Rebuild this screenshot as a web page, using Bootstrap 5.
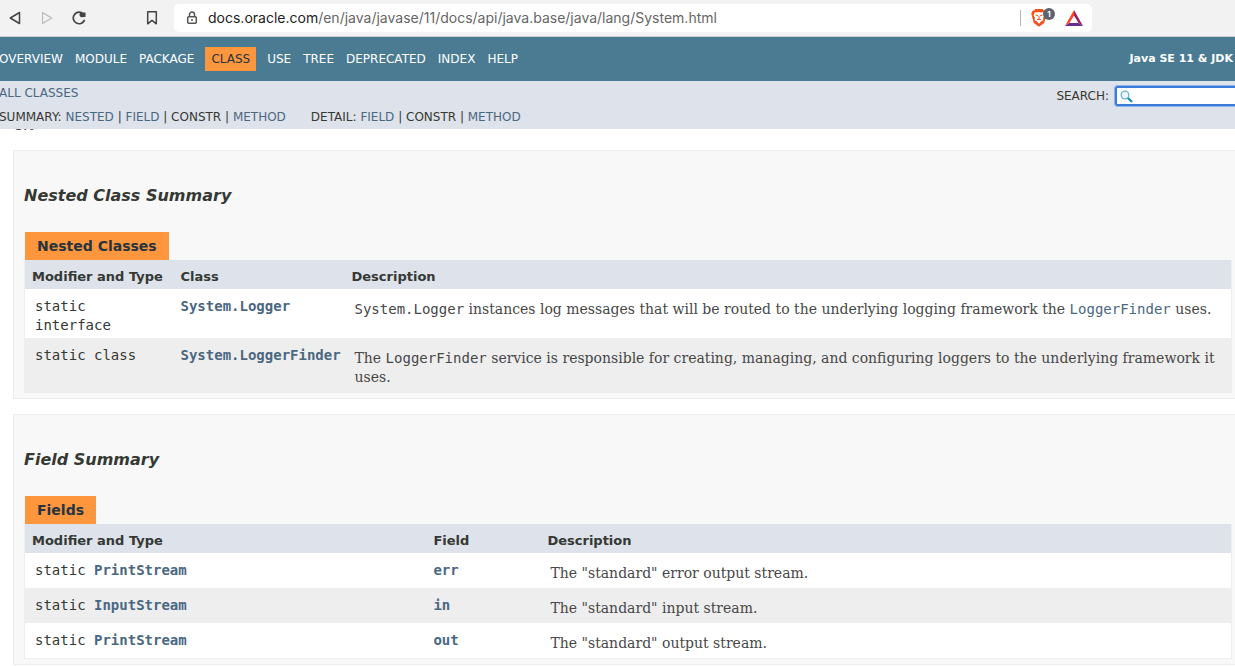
<!DOCTYPE html>
<html lang="en">
<head>
<meta charset="utf-8">
<meta name="viewport" content="width=device-width, initial-scale=1">
<title>System (Java SE 11 &amp; JDK 11)</title>
<link href="https://cdn.jsdelivr.net/npm/bootstrap@5.3.0/dist/css/bootstrap.min.css" rel="stylesheet">
<style>
body{font-family:"DejaVu Sans",sans-serif;font-size:14px;line-height:19px;color:#353833;background:#fff;overflow-x:hidden}
a{color:#4a6782;text-decoration:none}
.browser-bar{background:#f2f2f2;border-bottom:1px solid #d0d0d0;height:37px;padding-left:8px;color:#444}
.browser-bar button{border:0;background:none;padding:0;line-height:0;color:inherit}
.tool-group{width:166px}
.address{width:918px;height:28px;border-radius:5px;background:#fff;padding:0 9px 0 12px}
.address-text{font-family:Inter,sans-serif;font-size:14px;line-height:20px;color:#666;white-space:nowrap;margin-left:10px}
.address-text span{color:#222}
.divider{width:1px;height:16px;background:#b5b5b5}
.shield-count{position:absolute;left:14px;top:0;width:12px;height:12px;border-radius:6px;background:#5e6170;color:#fff;font:bold 8px/12px Inter,sans-serif;text-align:center}
.top-nav{background:#4a7b93;height:44px;font-size:12px;line-height:14px;overflow:hidden}
.top-nav ul{margin-left:-7px}
.top-nav li{padding:5px 6px}
.top-nav li a{color:#fff}
.top-nav li.current{background:#fd963c;color:#253441;margin:0 5px}
.about{font-size:11px;font-weight:bold;color:#fff;padding-right:2px}
.sub-nav{background:#dee2ea;height:48px;font-size:12px;line-height:14px;overflow:hidden}
.sub-links{margin-left:-1px;padding-top:5px;gap:10px;white-space:pre}
.sub-links .detail{margin-left:25px}
.search-line{padding-top:5px;margin-right:-8px;gap:6px}
.search-line label{padding-top:3px}
.search-box{width:128px;height:20px;border:2px solid #3b7cd9;outline:1px solid #8cb4ee;border-radius:2px;background:#fff;padding:0 3px}
.search-box input{width:100px;border:0;outline:0;padding:0;font-size:12px;height:14px}
.since{height:21px;padding-left:14px;overflow:hidden}
.since span{display:block;font:14px/19px "DejaVu Serif",serif;margin-top:-13px}
.panel{border:1px solid #ededed;border-right:0;background:#f8f8f8;margin:0 0 15px 13px;padding:35px 3px 5px 10px}
.panel h3{font-size:16px;line-height:20px;font-style:italic;font-weight:bold;margin:0 0 26px}
.summary{border:solid #eee;border-width:0 1px;table-layout:fixed;width:100%;caption-side:top}
.summary caption{padding:0;color:#253441;font-size:14px;font-weight:bold}
.summary caption span{display:inline-block;background:#fd963c;padding:5px 12px 4px;margin-left:1px;line-height:19px;vertical-align:top}
.summary th{background:#dee2ea;font-size:13px;line-height:18px;padding:8px 3px 3px 7px}
.summary td{padding:8px 3px 3px 7px;vertical-align:top;background:#fff}
.summary td:first-child{padding-left:10px}
.summary tr:nth-child(even) td{background:#eee}
.mono{font-family:"DejaVu Sans Mono",monospace;font-size:14px}
.note{font-family:"DejaVu Serif",serif;color:#474747;padding:3px 3px 2px}
.nested .note{padding-bottom:3px}
.fields{border-bottom:1px solid #eee}
.nested .type-col{width:149px}.nested .name-col{width:171px}
.fields .type-col{width:33.3%}.fields .name-col{width:114px}
</style>
</head>
<body>
<header class="browser-bar d-flex align-items-center">
  <div class="tool-group d-flex align-items-center">
    <button type="button" aria-label="Back"><svg width="14" height="16" viewBox="0 0 14 16"><path d="M11.5 2.5v11L2.3 8z" fill="none" stroke="currentColor" stroke-width="1.5" stroke-linejoin="round"/></svg></button>
    <button type="button" class="ms-3 ps-1" aria-label="Forward"><svg width="14" height="16" viewBox="0 0 14 16"><path d="M0.500 2.500v11L9.700 8z" fill="none" stroke="#bbb" stroke-width="1.3" stroke-linejoin="round"/></svg></button>
    <button type="button" class="ms-3" aria-label="Reload"><svg width="16" height="16" viewBox="0 0 16 16"><path d="M12.300 10.500A5.800 5.800 0 1 1 9.800 2.800" fill="none" stroke="currentColor" stroke-width="1.700" stroke-linecap="round"/><path d="M9 2.500h4.500v4.500H11A2.300 2.300 0 0 1 9 2.500z" fill="currentColor"/></svg></button>
    <button type="button" class="ms-auto me-3" aria-label="Bookmark"><svg width="12" height="16" viewBox="0 0 12 16"><path d="M1.700 1.800h8.600v12L6 10.300 1.700 13.800z" fill="none" stroke="currentColor" stroke-width="1.500" stroke-linejoin="round"/></svg></button>
  </div>
  <div class="address d-flex align-items-center">
    <svg width="12" height="14" viewBox="0 0 12 14"><path d="M3.500 6V3.500a2.500 2.500 0 0 1 5 0V6" fill="none" stroke="#555" stroke-width="1.500"/><rect x="1.700" y="5.800" width="8.600" height="6.500" rx="1" fill="none" stroke="#555" stroke-width="1.500"/><circle cx="6" cy="9" r="1" fill="#555"/></svg>
    <div class="address-text flex-grow-1"><span>docs.oracle.com</span>/en/java/javase/11/docs/api/java.base/java/lang/System.html</div>
    <div class="divider"></div>
    <button type="button" class="position-relative ms-2" aria-label="Shields"><svg width="20" height="20" viewBox="0 0 20 20"><path d="M6.500 1h7L15 2.500l1.700.5 1 2.500-.700 3L15.200 15 10 18.800 4.800 15 3 8.500l-.700-3 1-2.500L5 2.500z" fill="#f4511e"/><path d="M6 4l2 .5 2-.5 2 .5 2-.5 1.500 3.500-1.500 2.500.5 2-2.500 1.500L10 15.800 8 13.500 5.500 12l.500-2L4.500 7.500z" fill="#fff"/><path d="M6.500 7l2.500.8M13.500 7l-2.500.8M10 8v3M8 11.500h4" stroke="#f4511e" fill="none"/></svg><span class="shield-count">1</span></button>
    <button type="button" class="ms-3" aria-label="Rewards"><svg width="18" height="16" viewBox="0 0 18 16"><path d="M9 0L0 16l4.500-3L9 5.500z" fill="#ff4724"/><path d="M9 0l9 16-4.500-3L9 5.500z" fill="#9e1f63"/><path d="M0 16h18l-4.500-3h-9z" fill="#662d91"/></svg></button>
  </div>
</header>

<nav class="top-nav d-flex align-items-center justify-content-between text-nowrap">
  <ul class="list-unstyled d-flex mb-0">
    <li><a href="#">OVERVIEW</a></li><li><a href="#">MODULE</a></li><li><a href="#">PACKAGE</a></li><li class="current">CLASS</li><li><a href="#">USE</a></li><li><a href="#">TREE</a></li><li><a href="#">DEPRECATED</a></li><li><a href="#">INDEX</a></li><li><a href="#">HELP</a></li>
  </ul>
  <div class="about">Java SE 11 &amp; JDK</div>
</nav>
<div class="sub-nav d-flex justify-content-between">
  <div class="sub-links d-flex flex-column">
    <div><a href="#">ALL CLASSES</a></div>
    <div><span>SUMMARY: <a href="#">NESTED</a> | <a href="#">FIELD</a> | CONSTR | <a href="#">METHOD</a></span><span class="detail">DETAIL: <a href="#">FIELD</a> | CONSTR | <a href="#">METHOD</a></span></div>
  </div>
  <div class="search-line d-flex align-items-start">
    <label for="search">SEARCH:</label>
    <div class="search-box d-flex align-items-center">
      <svg width="13" height="13" viewBox="0 0 13 13"><circle cx="5" cy="5" r="3.800" fill="#eef8fc" stroke="#6bb1cf" stroke-width="1.300"/><path d="M8 8l4 4" stroke="#2090c0" stroke-width="2.400"/></svg>
      <input id="search" type="text">
    </div>
  </div>
</div>

<main>
  <div class="since"><span>1.0</span></div>
  <section class="panel">
    <h3>Nested Class Summary</h3>
    <table class="summary nested">
      <caption><span>Nested Classes</span></caption>
      <colgroup><col class="type-col"><col class="name-col"><col></colgroup>
      <thead><tr><th>Modifier and Type</th><th>Class</th><th>Description</th></tr></thead>
      <tbody>
        <tr><td class="mono">static<br>interface</td><td class="mono"><a href="#" class="fw-bold">System.Logger</a></td><td><div class="note"><span class="mono">System.Logger</span> instances log messages that will be routed to the underlying logging framework the <a href="#" class="mono">LoggerFinder</a> uses.</div></td></tr>
        <tr><td class="mono">static class</td><td class="mono"><a href="#" class="fw-bold">System.LoggerFinder</a></td><td><div class="note">The <span class="mono">LoggerFinder</span> service is responsible for creating, managing, and configuring loggers to the underlying framework it uses.</div></td></tr>
      </tbody>
    </table>
  </section>
  <section class="panel mb-0">
    <h3>Field Summary</h3>
    <table class="summary fields">
      <caption><span>Fields</span></caption>
      <colgroup><col class="type-col"><col class="name-col"><col></colgroup>
      <thead><tr><th>Modifier and Type</th><th>Field</th><th>Description</th></tr></thead>
      <tbody>
        <tr><td class="mono">static <a href="#" class="fw-bold">PrintStream</a></td><td class="mono"><a href="#" class="fw-bold">err</a></td><td><div class="note">The "standard" error output stream.</div></td></tr>
        <tr><td class="mono">static <a href="#" class="fw-bold">InputStream</a></td><td class="mono"><a href="#" class="fw-bold">in</a></td><td><div class="note">The "standard" input stream.</div></td></tr>
        <tr><td class="mono">static <a href="#" class="fw-bold">PrintStream</a></td><td class="mono"><a href="#" class="fw-bold">out</a></td><td><div class="note">The "standard" output stream.</div></td></tr>
      </tbody>
    </table>
  </section>
</main>
<script src="https://cdn.jsdelivr.net/npm/bootstrap@5.3.0/dist/js/bootstrap.bundle.min.js"></script>
</body>
</html>
